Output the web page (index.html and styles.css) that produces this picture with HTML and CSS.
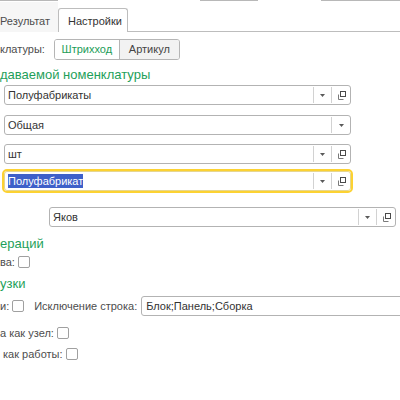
FILE: index.html
```html
<!DOCTYPE html>
<html lang="ru">
<head>
<meta charset="utf-8">
<title>Настройки</title>
<link rel="stylesheet" href="styles.css">
</head>
<body>
<div class="page">
  <div class="tabbar">
    <div class="tab">Результат</div>
    <div class="tab tab-active">Настройки</div>
  </div>

  <div class="line kind-row">
    <span class="label">клатуры:</span>
    <div class="switch">
      <span class="switch-item switch-on">Штрихход</span>
      <span class="switch-item">Артикул</span>
    </div>
  </div>

  <div class="group-title g1">даваемой номенклатуры</div>

  <div class="field f1">
    <span class="value">Полуфабрикаты</span>
    <span class="btn drop"><svg width="5" height="3" viewBox="0 0 5 3"><path d="M0 0h5L2.5 3z" fill="#5a5a5a"/></svg></span>
    <span class="btn open"><svg width="9" height="9" viewBox="0 0 9 9"><path d="M1.5 3.5v5h5" fill="none" stroke="#7a7a7a"/><rect x="3.5" y="0.5" width="5" height="5" fill="#fff" stroke="#4a4a4a"/></svg></span>
  </div>

  <div class="field f2">
    <span class="value">Общая</span>
    <span class="btn drop wide"><svg width="5" height="3" viewBox="0 0 5 3"><path d="M0 0h5L2.5 3z" fill="#5a5a5a"/></svg></span>
  </div>

  <div class="field f3">
    <span class="value">шт</span>
    <span class="btn drop"><svg width="5" height="3" viewBox="0 0 5 3"><path d="M0 0h5L2.5 3z" fill="#5a5a5a"/></svg></span>
    <span class="btn open"><svg width="9" height="9" viewBox="0 0 9 9"><path d="M1.5 3.5v5h5" fill="none" stroke="#7a7a7a"/><rect x="3.5" y="0.5" width="5" height="5" fill="#fff" stroke="#4a4a4a"/></svg></span>
  </div>

  <div class="field f4 focused">
    <span class="value"><span class="selected">Полуфабрикат</span></span>
    <span class="btn drop"><svg width="5" height="3" viewBox="0 0 5 3"><path d="M0 0h5L2.5 3z" fill="#5a5a5a"/></svg></span>
    <span class="btn open"><svg width="9" height="9" viewBox="0 0 9 9"><path d="M1.5 3.5v5h5" fill="none" stroke="#7a7a7a"/><rect x="3.5" y="0.5" width="5" height="5" fill="#fff" stroke="#4a4a4a"/></svg></span>
  </div>

  <div class="field f5">
    <span class="value">Яков</span>
    <span class="btn drop"><svg width="5" height="3" viewBox="0 0 5 3"><path d="M0 0h5L2.5 3z" fill="#5a5a5a"/></svg></span>
    <span class="btn open"><svg width="9" height="9" viewBox="0 0 9 9"><path d="M1.5 3.5v5h5" fill="none" stroke="#7a7a7a"/><rect x="3.5" y="0.5" width="5" height="5" fill="#fff" stroke="#4a4a4a"/></svg></span>
  </div>

  <div class="group-title g2">ераций</div>

  <div class="line check-row r1">
    <span class="label">ва:</span>
    <span class="checkbox"></span>
  </div>

  <div class="group-title g3">узки</div>

  <div class="line excl-row">
    <span class="label">и:</span>
    <span class="checkbox"></span>
    <span class="label excl-label">Исключение строка:</span>
    <div class="text-input">Блок;Панель;Сборка</div>
  </div>

  <div class="line check-row r2">
    <span class="label">а как узел:</span>
    <span class="checkbox"></span>
  </div>

  <div class="line check-row r3">
    <span class="label">&nbsp;как работы:</span>
    <span class="checkbox"></span>
  </div>
</div>
</body>
</html>
```

FILE: styles.css
```css
html, body {
  margin: 0;
  padding: 0;
  background: #fff;
}

body {
  width: 400px;
  height: 400px;
  overflow: hidden;
  font-family: "Liberation Sans", Arial, sans-serif;
  font-size: 11px;
  color: #4d4d4d;
}

.page {
  display: flex;
  flex-direction: column;
  width: 400px;
  overflow: hidden;
}

/* tab strip */
.tabbar {
  display: flex;
  align-items: flex-end;
  height: 32px;
  box-sizing: border-box;
  border-bottom: 1px solid #bdbdbd;
  background: linear-gradient(to right,
      #b8b8b8 0 58px, transparent 58px 200px,
      #b8b8b8 200px 258px, transparent 258px 321px,
      #b8b8b8 321px) top left / 100% 1px no-repeat;
}

.tab {
  box-sizing: border-box;
  height: 30px;
  width: 58px;
  padding-top: 13px;
  color: #4d4d4d;
  background: #f6f6f6;
  margin-bottom: -1px;
  white-space: nowrap;
}

.tab-active {
  width: 70px;
  height: 24px;
  padding: 6px 0 0 9px;
  background: #fff;
  color: #333;
  border: 1px solid #bdbdbd;
  border-bottom: none;
  border-radius: 3px 3px 0 0;
}

.line {
  display: flex;
  align-items: center;
  white-space: nowrap;
}

.label {
  color: #4d4d4d;
  flex: none;
}

/* tumbler of two options */
.kind-row {
  margin-top: 6px;
  height: 22px;
}

.switch {
  display: flex;
  margin-left: 9px;
  height: 21px;
  box-sizing: border-box;
  border: 1px solid #b5b5b5;
  border-radius: 3px;
  overflow: hidden;
}

.switch-item {
  display: flex;
  align-items: center;
  justify-content: center;
  width: 64px;
  color: #444;
  background: #f2f2f2;
}

.switch-on {
  color: #1c9d58;
  background: #fff;
  border-right: 1px solid #b5b5b5;
}

.switch-item + .switch-item {
  width: 59px;
}

.group-title {
  font-size: 13px;
  line-height: 18px;
  height: 18px;
  color: #1e9f5a;
  white-space: nowrap;
}

.g1 { margin-top: 6px; }
.g2 { margin-top: 8px; }
.g3 { margin-top: 7px; }

/* input boxes with buttons */
.field {
  display: flex;
  box-sizing: border-box;
  height: 20px;
  width: 347px;
  flex: none;
  margin-left: 4px;
  border: 1px solid #b3b3b3;
  border-radius: 3px;
  background: #fff;
}

.f1 { margin-top: 1px; }
.f2 { margin-top: 10px; }
.f3 { margin-top: 9px; }
.f4 { margin-top: 7px; }
.f5 { margin-top: 16px; margin-left: 49px; }

.focused {
  outline: 2px solid #fcd232;
  outline-offset: 0;
  border-color: #e6d690;
}

.value {
  flex: 1;
  display: flex;
  align-items: center;
  padding-left: 3px;
  color: #333;
  overflow: hidden;
}

.selected {
  background: #3e60c9;
  color: #fff;
  line-height: 14px;
}

.btn {
  display: flex;
  align-items: center;
  justify-content: center;
  width: 17px;
  border-left: 1px solid #d2d2d2;
  margin: 1px 0;
}

.open {
  width: 18px;
}

.drop.wide {
  width: 18px;
}

/* flag boxes */
.checkbox {
  display: inline-block;
  flex: none;
  box-sizing: border-box;
  width: 12px;
  height: 12px;
  border: 1px solid #a0a0a0;
  border-radius: 2px;
  background: #fff;
  margin-left: 3px;
}

.check-row {
  height: 13px;
}

.r1 { margin-top: 2px; }
.r2 { margin-top: 10px; }
.r3 { margin-top: 8px; }

.excl-row {
  margin-top: 3px;
  height: 20px;
}

.excl-label {
  margin-left: 10px;
}

.text-input {
  box-sizing: border-box;
  height: 20px;
  width: 280px;
  flex: none;
  margin-left: 4px;
  padding: 0 4px;
  display: flex;
  align-items: center;
  border: 1px solid #b3b3b3;
  border-radius: 3px;
  color: #333;
}
```
